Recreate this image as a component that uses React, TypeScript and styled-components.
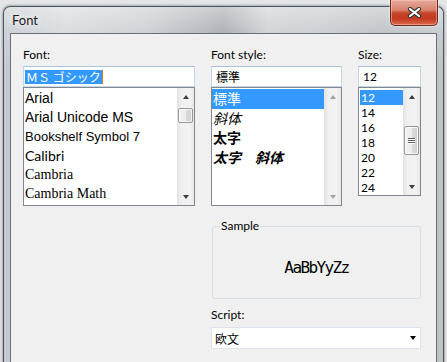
import React from "react";
import styled, { createGlobalStyle } from "styled-components";

const UI = 'Lato, "Noto Sans CJK JP", sans-serif';
const CJK = '"Noto Sans CJK JP", sans-serif';

const GlobalStyle = createGlobalStyle`
  html, body {
    margin: 0;
    padding: 0;
  }
  body {
    background: #e3e5e7;
    font-family: ${UI};
    color: #000;
  }
`;

type FontEntry = { name: string; family: string; size: number };

const fonts: FontEntry[] = [
  { name: "Arial", family: '"Liberation Sans", sans-serif', size: 14 },
  { name: "Arial Unicode MS", family: '"Liberation Sans", sans-serif', size: 14 },
  { name: "Bookshelf Symbol 7", family: '"Liberation Sans", sans-serif', size: 13 },
  { name: "Calibri", family: "Lato, sans-serif", size: 14 },
  { name: "Cambria", family: '"Liberation Serif", serif', size: 14 },
  { name: "Cambria Math", family: '"Liberation Serif", serif', size: 14 },
];

const styles = [
  { label: "標準", italic: false, bold: false },
  { label: "斜体", italic: true, bold: false },
  { label: "太字", italic: false, bold: true },
  { label: "太字　斜体", italic: true, bold: true },
];

const sizes = ["12", "14", "16", "18", "20", "22", "24"];

export default function App() {
  return (
    <>
      <GlobalStyle />
      <Page>
        <Window>
          <TitleBar>
            <Title>Font</Title>
            <CloseButton>
              <svg width="15" height="11" viewBox="0 0 15 11">
                <path d="M3 2 L12 9 M12 2 L3 9" stroke="#2f3338" strokeWidth="4.2" strokeLinecap="round" />
                <path d="M3 2 L12 9 M12 2 L3 9" stroke="#ffffff" strokeWidth="2.2" strokeLinecap="round" />
              </svg>
            </CloseButton>
          </TitleBar>

          <Client>
            <Field>
              <Label>Font:</Label>
              <TextBox $inset={1}>
                <Selection>ＭＳ ゴシック</Selection>
                <Caret />
              </TextBox>
              <ListBox $height={119}>
                <Items $top={1}>
                  {fonts.map((f) => (
                    <FontItem key={f.name} $family={f.family} $size={f.size}>
                      {f.name}
                    </FontItem>
                  ))}
                </Items>
                <ScrollBar thumb={{ top: 3, height: 15 }} />
              </ListBox>
            </Field>

            <Field>
              <Label>Font style:</Label>
              <TextBox $inset={4}>
                <CjkText>標準</CjkText>
              </TextBox>
              <ListBox $height={119}>
                <Items $top={1}>
                  {styles.map((s, i) => (
                    <StyleItem key={s.label} $italic={s.italic} $bold={s.bold} $selected={i === 0}>
                      {s.label}
                    </StyleItem>
                  ))}
                </Items>
                <ScrollBar disabled />
              </ListBox>
            </Field>

            <Field>
              <Label>Size:</Label>
              <TextBox $inset={4}>12</TextBox>
              <ListBox $height={109}>
                <Items $top={2}>
                  {sizes.map((s, i) => (
                    <SizeItem key={s} $selected={i === 0}>
                      {s}
                    </SizeItem>
                  ))}
                </Items>
                <ScrollBar thumb={{ top: 21, height: 29, grip: true }} />
              </ListBox>
            </Field>

            <SampleGroup>
              <Legend>Sample</Legend>
              <SampleText>AaBbYyZz</SampleText>
            </SampleGroup>

            <ScriptField>
              <Label>Script:</Label>
              <ComboBox>
                <CjkText>欧文</CjkText>
                <DropArrow />
              </ComboBox>
            </ScriptField>
          </Client>
        </Window>
      </Page>
    </>
  );
}

function ScrollBar({
  thumb,
  disabled,
}: {
  thumb?: { top: number; height: number; grip?: boolean };
  disabled?: boolean;
}) {
  return (
    <Track>
      <ArrowButton>
        <Arrow $up $disabled={disabled} />
      </ArrowButton>
      <Rail>
        {thumb && (
          <Thumb $top={thumb.top} $height={thumb.height}>
            {thumb.grip && (
              <Grip>
                <span />
                <span />
                <span />
              </Grip>
            )}
          </Thumb>
        )}
      </Rail>
      <ArrowButton>
        <Arrow $disabled={disabled} />
      </ArrowButton>
    </Track>
  );
}

const Page = styled.div`
  width: 447px;
  height: 362px;
  overflow: hidden;
  padding: 6px 0 0 3px;
  box-sizing: border-box;
`;

const Window = styled.div`
  width: 441px;
  height: 380px;
  box-sizing: border-box;
  border: 1px solid #4b5561;
  border-bottom: none;
  border-radius: 7px 7px 0 0;
  padding: 0 6px;
  display: flex;
  flex-direction: column;
  box-shadow: 0 0 3px rgba(0, 0, 0, 0.55);
  background: linear-gradient(
      to bottom,
      rgba(255, 255, 255, 0.45) 0px,
      rgba(255, 255, 255, 0.15) 26px,
      rgba(255, 255, 255, 0) 60px
    ),
    linear-gradient(
      to right,
      #c4c9ce 0%,
      #d3d7db 14%,
      #c5cacf 32%,
      #a9aeb4 46%,
      #9ea4aa 50%,
      #c9cdd1 60%,
      #c2c7cc 72%,
      #b6bbc0 86%,
      #bfc4c9 100%
    );
`;

const TitleBar = styled.div`
  height: 26px;
  display: flex;
  justify-content: space-between;
  align-items: flex-start;
`;

const Title = styled.div`
  padding-left: 2px;
  font-family: ${UI};
  font-size: 13px;
  line-height: 26px;
  color: #1b1b1b;
  text-shadow: 0 0 6px rgba(255, 255, 255, 0.9), 0 0 10px rgba(255, 255, 255, 0.7);
`;

const CloseButton = styled.div`
  width: 48px;
  height: 26px;
  margin: -7px -1px 0 0;
  box-sizing: border-box;
  border: 1px solid #6b2a1f;
  border-top: none;
  border-radius: 0 0 5px 5px;
  display: flex;
  align-items: center;
  justify-content: center;
  box-shadow: inset 0 0 0 1px rgba(255, 210, 200, 0.45), 0 0 0 1px rgba(255, 255, 255, 0.35);
  background: linear-gradient(
    to bottom,
    #e7a999 0%,
    #d98471 40%,
    #c8442a 52%,
    #c23a20 75%,
    #de6a4c 100%
  );
`;

const Client = styled.div`
  flex: 1;
  background: #f0f0f0;
  border: 1px solid #6a6e72;
  padding: 13px 0 0 12px;
  display: grid;
  grid-template-columns: 172px 131px 63px;
  column-gap: 16px;
  align-content: start;
`;

const Field = styled.div`
  display: flex;
  flex-direction: column;
`;

const Label = styled.div`
  font-family: ${UI};
  font-size: 12px;
  line-height: 16px;
  margin-bottom: 3px;
  color: #000;
`;

const TextBox = styled.div<{ $inset: number }>`
  height: 21px;
  box-sizing: border-box;
  background: #fff;
  border: 1px solid #c3d7ec;
  border-top-color: #a8c2dd;
  padding-left: ${(p) => p.$inset}px;
  display: flex;
  align-items: center;
  font-family: ${UI};
  font-size: 12px;
`;

const Selection = styled.span`
  display: inline-block;
  height: 14px;
  line-height: 14px;
  padding: 0 1px;
  background: #3399ff;
  color: #fff;
  font-family: ${CJK};
  font-size: 12px;
`;

const Caret = styled.span`
  display: inline-block;
  width: 1px;
  height: 14px;
  background: #e8761f;
`;

const CjkText = styled.span`
  font-family: ${CJK};
  font-size: 12px;
`;

const ListBox = styled.div<{ $height: number }>`
  height: ${(p) => p.$height}px;
  box-sizing: border-box;
  border: 1px solid #82878f;
  background: #fff;
  display: flex;
`;

const Items = styled.div<{ $top: number }>`
  flex: 1;
  min-width: 0;
  padding-top: ${(p) => p.$top}px;
  overflow: hidden;
`;

const FontItem = styled.div<{ $family: string; $size: number }>`
  height: 19px;
  line-height: 19px;
  padding-left: 1px;
  white-space: nowrap;
  font-family: ${(p) => p.$family};
  font-size: ${(p) => p.$size}px;
`;

const StyleItem = styled.div<{ $italic: boolean; $bold: boolean; $selected: boolean }>`
  height: 19.5px;
  line-height: 19.5px;
  padding-left: 1px;
  white-space: nowrap;
  font-family: ${CJK};
  font-size: 14px;
  font-style: ${(p) => (p.$italic ? "italic" : "normal")};
  font-weight: ${(p) => (p.$bold ? 700 : 400)};
  background: ${(p) => (p.$selected ? "#3399ff" : "transparent")};
  color: ${(p) => (p.$selected ? "#fff" : "#000")};
`;

const SizeItem = styled.div<{ $selected: boolean }>`
  height: 15px;
  line-height: 15px;
  margin-left: 1px;
  padding-left: 1px;
  font-family: ${UI};
  font-size: 12px;
  background: ${(p) => (p.$selected ? "#3399ff" : "transparent")};
  color: ${(p) => (p.$selected ? "#fff" : "#000")};
`;

const Track = styled.div`
  width: 17px;
  flex: none;
  display: flex;
  flex-direction: column;
  background: linear-gradient(to right, #e2e2e2 0%, #f0f0f0 25%, #f2f2f2 75%, #e8e8e8 100%);
`;

const ArrowButton = styled.div`
  height: 17px;
  display: flex;
  align-items: center;
  justify-content: center;
`;

const Arrow = styled.div<{ $up?: boolean; $disabled?: boolean }>`
  width: 0;
  height: 0;
  border-left: 3.5px solid transparent;
  border-right: 3.5px solid transparent;
  ${(p) =>
    p.$up
      ? `border-bottom: 4px solid ${p.$disabled ? "#a3a3a3" : "#3c3c3c"};`
      : `border-top: 4px solid ${p.$disabled ? "#a3a3a3" : "#3c3c3c"};`}
`;

const Rail = styled.div`
  flex: 1;
`;

const Thumb = styled.div<{ $top: number; $height: number }>`
  margin: ${(p) => p.$top}px 1px 0 1px;
  height: ${(p) => p.$height}px;
  box-sizing: border-box;
  border: 1px solid #979797;
  border-radius: 2px;
  box-shadow: inset 0 0 0 1px rgba(255, 255, 255, 0.8);
  background: linear-gradient(to right, #f3f3f3 0%, #ebebeb 50%, #dbdbdb 51%, #cfcfcf 100%);
  display: flex;
  align-items: center;
  justify-content: center;
`;

const Grip = styled.div`
  display: flex;
  flex-direction: column;
  gap: 1px;

  span {
    display: block;
    width: 7px;
    height: 1px;
    background: #5f5f5f;
    box-shadow: 0 1px 0 #ffffff;
  }
`;

const SampleGroup = styled.fieldset`
  grid-column: 2 / 4;
  margin: 12px 0 0 1px;
  padding: 0 7px;
  border: 1px solid #d5dfe5;
  border-radius: 3px;
  min-width: 0;
`;

const Legend = styled.legend`
  padding: 0 1px;
  font-family: ${UI};
  font-size: 12px;
  line-height: 16px;
`;

const SampleText = styled.div`
  height: 64px;
  padding-top: 2px;
  box-sizing: border-box;
  display: flex;
  align-items: center;
  justify-content: center;
  font-family: "DejaVu Sans Mono", monospace;
  font-size: 16px;
  letter-spacing: -1.6px;
`;

const ScriptField = styled.div`
  grid-column: 2 / 4;
  margin-top: 8px;
  display: flex;
  flex-direction: column;
`;

const ComboBox = styled.div`
  height: 22px;
  margin-top: 1px;
  box-sizing: border-box;
  background: #fff;
  border: 1px solid #dde3ea;
  padding: 0 4px 0 3px;
  display: flex;
  align-items: center;
  justify-content: space-between;
`;

const DropArrow = styled.div`
  width: 0;
  height: 0;
  border-left: 3.5px solid transparent;
  border-right: 3.5px solid transparent;
  border-top: 4px solid #000;
`;
